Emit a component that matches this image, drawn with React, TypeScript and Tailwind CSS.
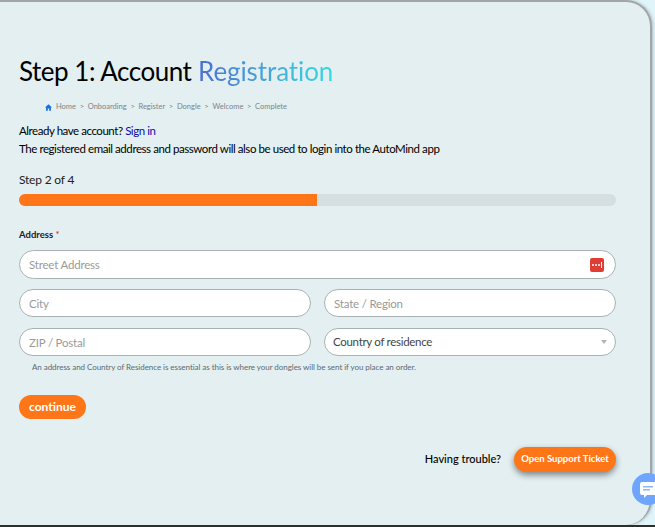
const crumbs = ["Onboarding", "Register", "Dongle", "Welcome", "Complete"];

const inputClass =
  "h-[28px] w-full rounded-full border border-[#a9b2b2] bg-white px-[9px] pt-[1px] text-[11.5px] tracking-[-0.2px] text-[#9a9a9a] flex items-center";

export default function App() {
  return (
    <div className="relative h-[527px] w-[655px] overflow-hidden bg-[#dff5fa] font-['Lato',sans-serif]">
      <div className="h-[525px] w-[652px] rounded-tr-[26px] rounded-br-[26px] border-t-2 border-r-2 border-[#a2a6aa] bg-[#e3eff1] pl-[19px] pr-[34px] pt-[52px] shadow-[1px_0_3px_rgba(120,130,135,0.5)]">
        <h1 className="text-[26px] leading-[34px] text-black">
          <span className="tracking-[-0.48px]">Step 1: Account</span>{" "}
          <span className="bg-gradient-to-r from-[#4a6fd0] to-[#35dae0] bg-clip-text tracking-[-0.1px] text-transparent">
            Registration
          </span>
        </h1>

        <div className="mt-[13px] flex items-center pl-[26px] text-[7.5px] leading-[12px] text-[#7d8587]">
          <svg width="7" height="7" viewBox="0 0 10 10" className="mr-[4px]">
            <path d="M5 0.5 0 5h1.5v4.5h2.5V6.5h2v3h2.5V5H10z" fill="#1a6fe0" />
          </svg>
          <span>Home</span>
          {crumbs.map((c) => (
            <span key={c}>
              <span className="mx-[3.7px]">&gt;</span>
              {c}
            </span>
          ))}
        </div>

        <p className="mt-[9px] text-[11.5px] leading-[18px] tracking-[-0.45px] text-black">
          Already have account? <span className="text-[#0a0ab0]">Sign in</span>
        </p>
        <p className="text-[11.5px] leading-[18px] tracking-[-0.43px] text-black">
          The registered email address and password will also be used to login into the AutoMind app
        </p>

        <p className="mt-[13px] text-[12px] leading-[18px] tracking-[-0.2px] text-[#222]">Step 2 of 4</p>
        <div className="mt-[5px] h-[12px] w-full overflow-hidden rounded-full bg-[#d5dfe0]">
          <div className="h-full w-[298px] bg-[#ff7618]" />
        </div>

        <p className="mt-[22px] text-[9.5px] font-bold leading-[14px] text-[#222]">
          Address <span className="font-normal text-[#e02020]">*</span>
        </p>

        <div className="mt-[8px] flex flex-col gap-[10px]">
          <div className={`${inputClass} !h-[29px] justify-between pr-[11px]`}>
            <span>Street Address</span>
            <span className="flex h-[14px] w-[14px] items-center justify-center gap-[1px] rounded-[2px] bg-[#e03c36]">
              <span className="h-[2px] w-[2px] rounded-full bg-white" />
              <span className="h-[2px] w-[2px] rounded-full bg-white" />
              <span className="h-[2px] w-[2px] rounded-full bg-white" />
              <span className="h-[6px] w-[1px] bg-white" />
            </span>
          </div>
          <div className="mb-[1px] grid grid-cols-2 gap-[13px]">
            <div className={inputClass}>City</div>
            <div className={inputClass}>State / Region</div>
          </div>
          <div className="grid grid-cols-2 gap-[13px]">
            <div className={inputClass}>ZIP / Postal</div>
            <div className={`${inputClass} justify-between !pt-0 pr-[8px] pl-[8px] !text-[#444] !tracking-[-0.3px]`}>
              <span>Country of residence</span>
              <span className="h-0 w-0 border-x-[3.5px] border-t-[4px] border-x-transparent border-t-[#b5b5b5]" />
            </div>
          </div>
        </div>

        <p className="mt-[5px] pl-[13px] text-[8px] leading-[12px] tracking-[-0.05px] text-[#5d6a70]">
          An address and Country of Residence is essential as this is where your dongles will be sent if you place an order.
        </p>

        <button className="mt-[22px] flex h-[24px] w-[67px] items-center justify-center rounded-full bg-[#ff7618] text-[12px] font-bold text-white">
          continue
        </button>

        <div className="mt-[28px] flex items-center justify-end">
          <span className="mr-[13px] text-[11px] font-medium text-black">Having trouble?</span>
          <button className="flex h-[25px] w-[102px] items-center justify-center rounded-full bg-[#ff7618] text-[9.5px] font-bold text-white shadow-[0_3px_6px_rgba(0,0,0,0.45)]">
            Open Support Ticket
          </button>
        </div>
      </div>

      <div className="absolute bottom-0 left-0 h-[2px] w-full bg-[#2c2f2a]" />

      {/* chat launcher, cut off by the window edge */}
      <div className="absolute left-[632px] top-[473px] flex h-[32px] w-[32px] items-center justify-center rounded-full bg-[#6da5ff]">
        <svg width="20" height="18" viewBox="0 0 20 18" className="ml-[3px] mt-[1px]">
          <path d="M2 1h16a2 2 0 0 1 2 2v9a2 2 0 0 1-2 2H7l-3 3v-3H2a2 2 0 0 1-2-2V3a2 2 0 0 1 2-2z" fill="#fff" />
          <rect x="3" y="5" width="10" height="1.5" fill="#8db8ff" />
          <rect x="3" y="8" width="7" height="1.5" fill="#8db8ff" />
        </svg>
      </div>
    </div>
  );
}
